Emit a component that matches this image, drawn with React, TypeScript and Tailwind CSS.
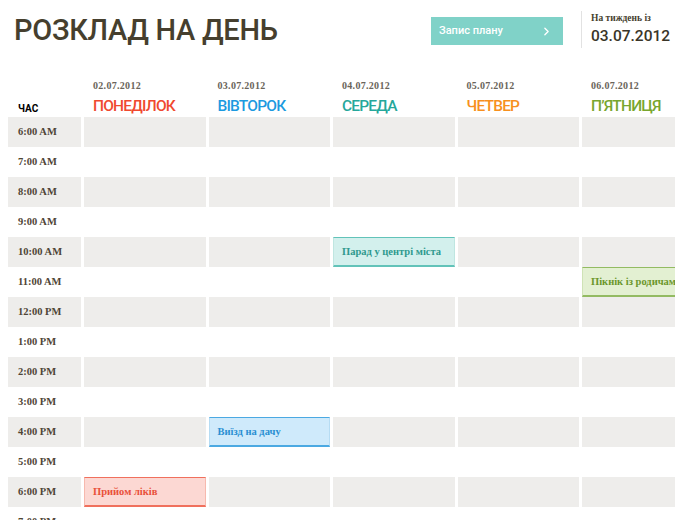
import { ChevronRight } from 'lucide-react';

const sans = { fontFamily: 'Roboto, "Liberation Sans", sans-serif' };

const days = [
  { date: '02.07.2012', name: 'ПОНЕДІЛОК', color: 'text-[#f0492f]' },
  { date: '03.07.2012', name: 'ВІВТОРОК', color: 'text-[#1c9ae0]' },
  { date: '04.07.2012', name: 'СЕРЕДА', color: 'text-[#26a79b]' },
  { date: '05.07.2012', name: 'ЧЕТВЕР', color: 'text-[#f7901e]' },
  { date: '06.07.2012', name: 'П’ЯТНИЦЯ', color: 'text-[#78a62e]' },
];

const hours = [
  '6:00 AM', '7:00 AM', '8:00 AM', '9:00 AM', '10:00 AM', '11:00 AM', '12:00 PM',
  '1:00 PM', '2:00 PM', '3:00 PM', '4:00 PM', '5:00 PM', '6:00 PM', '7:00 PM',
];

// key: "row-col"
const events: Record<string, { text: string; cls: string }> = {
  '4-2': {
    text: 'Парад у центрі міста',
    cls: 'bg-[#d3f0ed] border-[#62c3b9] border-x-[#bfe6e1] text-[#2f998e]',
  },
  '5-4': {
    text: 'Пікнік із родичами',
    cls: 'bg-[#e3f0d2] border-[#93bb62] border-x-[#cfe3b6] text-[#6b972c]',
  },
  '10-1': {
    text: 'Виїзд на дачу',
    cls: 'bg-[#cfeafb] border-[#4ba9e2] border-x-[#b6dcf3] text-[#2a8fd2]',
  },
  '12-0': {
    text: 'Прийом ліків',
    cls: 'bg-[#fcd8d3] border-[#f0705d] border-x-[#f7b9ae] text-[#e9503a]',
  },
};

export default function App() {
  return (
    <div className="relative h-[520px] w-[675px] overflow-hidden bg-white">
      {/* header */}
      <div className="flex h-[60px] items-start">
        <h1
          className="ml-[14px] mt-[16px] text-[29px] font-medium leading-none tracking-[-0.3px] text-[#463f2e]"
          style={sans}
        >
          РОЗКЛАД НА ДЕНЬ
        </h1>
        <button
          className="ml-auto mt-[17px] flex h-[28px] w-[132px] items-center justify-between bg-[#80d2c8] pl-[8px] pr-[10px] text-[11px] font-medium text-white"
          style={sans}
        >
          <span>Запис плану</span>
          <ChevronRight className="h-[13px] w-[13px]" strokeWidth={2.5} />
        </button>
        <div className="ml-[18px] mt-[11px] h-[37px] w-px bg-[#e2e2e2]" />
        <div className="ml-[9px] mt-[12px] flex w-[84px] flex-col">
          <span className="font-['Liberation_Serif',serif] text-[9.5px] font-bold leading-[12px] text-[#463f2e]">
            На тиждень із
          </span>
          <span className="mt-[3px] text-[15.5px] font-medium leading-[18px] text-[#3a3528]" style={sans}>
            03.07.2012
          </span>
        </div>
      </div>

      {/* schedule */}
      <div className="ml-[8px] mt-[18px] grid w-max grid-cols-[73px_repeat(5,121.5px)] gap-x-[3px]">
        <div className="flex h-[39px] items-end pb-[1px] pl-[10px]">
          <span className="text-[10px] font-bold text-black" style={sans}>
            ЧАС
          </span>
        </div>
        {days.map((d) => (
          <div key={d.date} className="flex h-[39px] flex-col pl-[9px]">
            <span className="mt-[1px] font-['Liberation_Serif',serif] text-[10px] font-bold leading-[13px] tracking-[0.3px] text-[#6a645a]">
              {d.date}
            </span>
            <span
              className={`mt-[4px] text-[15.5px] font-medium leading-[20px] tracking-[-0.8px] ${d.color}`}
              style={sans}
            >
              {d.name}
            </span>
          </div>
        ))}

        {hours.map((h, r) => {
          const gray = r % 2 === 0;
          return [
            <div
              key={h}
              className={`flex h-[30px] items-center pl-[10px] font-['Liberation_Serif',serif] text-[10.5px] font-bold text-[#4f4536] ${gray ? 'bg-[#eeedeb]' : ''}`}
            >
              {h}
            </div>,
            ...days.map((d, c) => {
              const ev = events[`${r}-${c}`];
              if (ev) {
                return (
                  <div
                    key={d.date + h}
                    className={`flex h-[30px] items-center whitespace-nowrap border-x border-b-2 border-t pl-[8px] font-['Liberation_Serif',serif] text-[10.5px] font-bold ${ev.cls}`}
                  >
                    {ev.text}
                  </div>
                );
              }
              return <div key={d.date + h} className={`h-[30px] ${gray ? 'bg-[#eeedeb]' : ''}`} />;
            }),
          ];
        })}
      </div>
    </div>
  );
}
